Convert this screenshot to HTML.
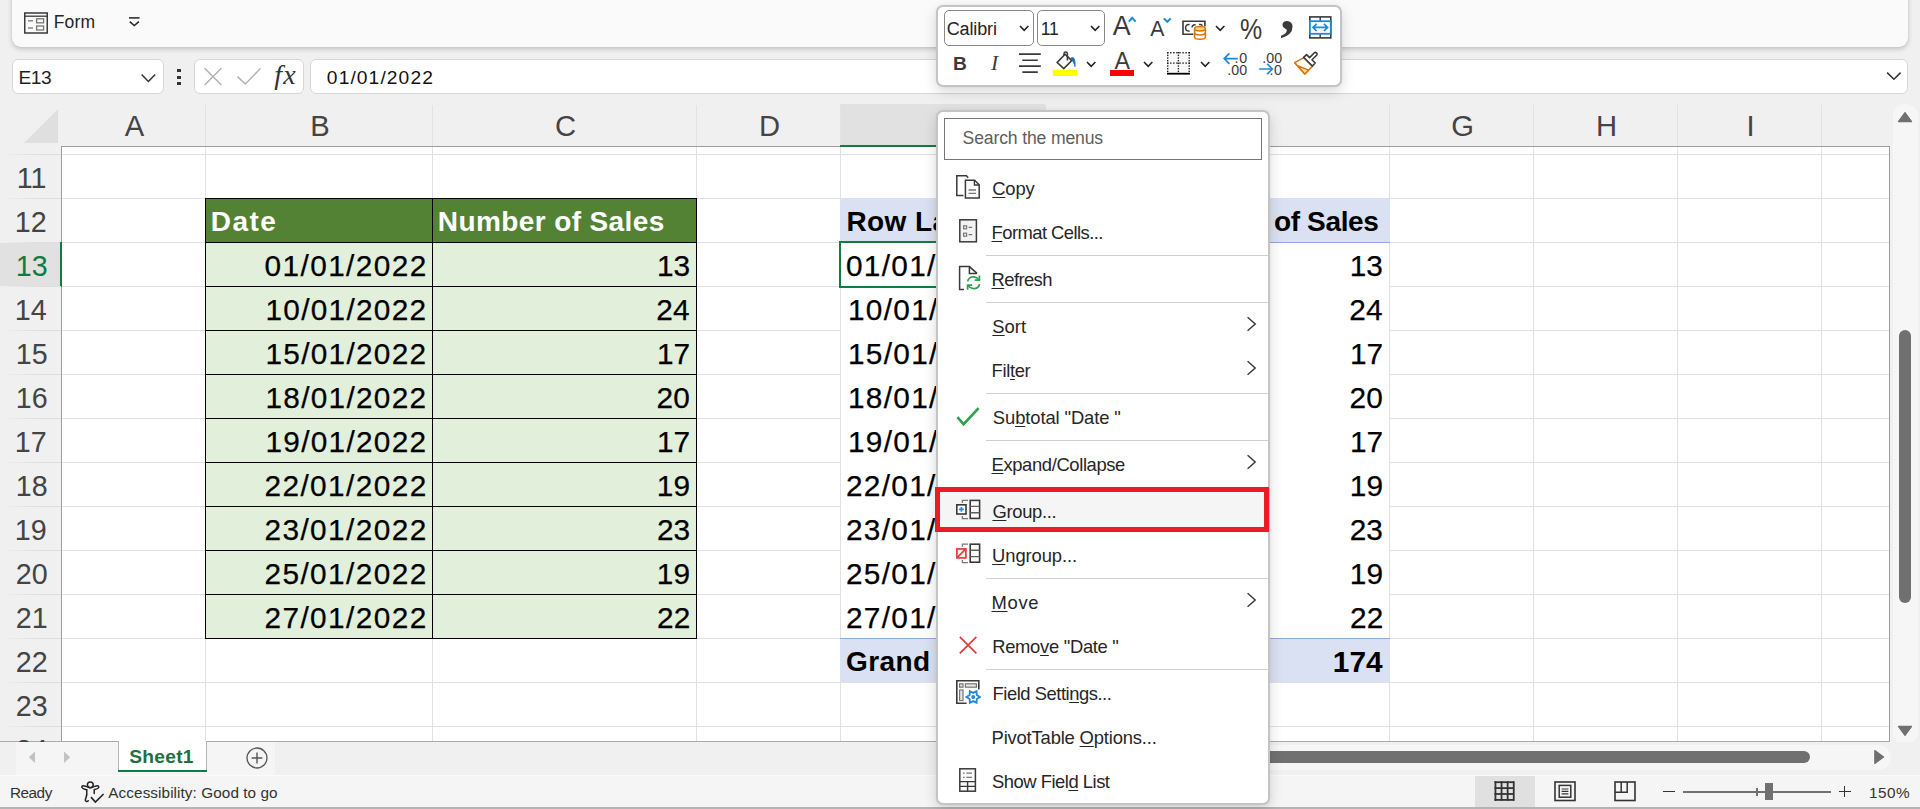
<!DOCTYPE html>
<html lang="en"><head><meta charset="utf-8"><title>Excel</title>
<style>
html,body{margin:0;padding:0}
body{width:1920px;height:809px;overflow:hidden;position:relative;background:#f0f0f0;font-family:"Liberation Sans",sans-serif}
body>div,body>svg,body>span{position:absolute;display:block}
svg{overflow:visible}
.t{white-space:pre}
u{text-decoration-thickness:1.1px;text-underline-offset:1.5px}
</style></head>
<body>
<div style="left:12px;top:-12px;width:1896px;height:59px;background:#fafafa;border-radius:9px;box-shadow:0 2px 5px rgba(0,0,0,.2),0 0 1px rgba(0,0,0,.12);"></div>
<svg style="left:23px;top:11px;" width="26" height="24" viewBox="0 0 26 24"><rect x="1.75" y="2" width="22.5" height="20" fill="none" stroke="#3b3a39" stroke-width="1.5"/>
<line x1="1.75" y1="5.2" x2="24.25" y2="5.2" stroke="#3b3a39" stroke-width="1.3"/>
<line x1="5" y1="9.8" x2="10" y2="9.8" stroke="#797775" stroke-width="1.3"/><line x1="5" y1="17" x2="10" y2="17" stroke="#797775" stroke-width="1.3"/>
<rect x="13.6" y="7.8" width="7" height="4" fill="none" stroke="#797775" stroke-width="1.3"/><rect x="13.6" y="15" width="7" height="4" fill="none" stroke="#797775" stroke-width="1.3"/></svg>
<span id="form" class="t" style="left:53.69px;top:10.74px;font-size:17.5px;line-height:23px;color:#242424;font-family:'Liberation Sans',sans-serif;letter-spacing:0.210px;">Form</span>
<svg style="left:127px;top:15px;" width="15" height="13" viewBox="0 0 15 13"><line x1="2" y1="2.9" x2="12.6" y2="2.9" stroke="#242424" stroke-width="1.5"/><polyline points="2.7,6.6 7.3,10.6 11.9,6.6" fill="none" stroke="#242424" stroke-width="1.5"/></svg>
<div style="left:12px;top:59px;width:152px;height:35px;background:#fff;border:1px solid #d6d6d6;border-radius:6px;box-sizing:border-box;"></div>
<span id="namebox" class="t" style="left:18.45px;top:65.20px;font-size:19.2px;line-height:25px;color:#1f1f1f;font-family:'Liberation Sans',sans-serif;letter-spacing:-0.394px;">E13</span>
<svg style="left:139px;top:71px;" width="20" height="14" viewBox="0 0 20 14"><polyline points="2.6,3.4 9.4,10.4 16.2,3.4" fill="none" stroke="#333" stroke-width="1.5"/></svg>
<div style="left:177px;top:69px;width:3.5px;height:3.2px;background:#333;"></div>
<div style="left:177px;top:75.5px;width:3.5px;height:3.2px;background:#333;"></div>
<div style="left:177px;top:81.5px;width:3.5px;height:3.2px;background:#333;"></div>
<div style="left:194px;top:59px;width:110px;height:35px;background:#fff;border:1px solid #d6d6d6;border-radius:6px;box-sizing:border-box;"></div>
<svg style="left:202px;top:66px;" width="22" height="22" viewBox="0 0 22 22"><path d="M2.6 2.2 L19.4 19 M19.4 2.2 L2.6 19" stroke="#b3b3b3" stroke-width="1.5" fill="none"/></svg>
<svg style="left:235px;top:65px;" width="28" height="22" viewBox="0 0 28 22"><polyline points="2.4,11.6 10.4,19 25.6,3.2" fill="none" stroke="#b3b3b3" stroke-width="1.5"/></svg>
<span id="fx" class="t" style="left:274.36px;top:56.75px;font-size:28px;line-height:36px;color:#333;font-family:'Liberation Serif',serif;font-style:italic;letter-spacing:1.213px;">fx</span>
<div style="left:310px;top:59px;width:1598px;height:35px;background:#fff;border:1px solid #d6d6d6;border-radius:6px;box-sizing:border-box;"></div>
<span id="formula" class="t" style="left:326.87px;top:65.20px;font-size:19.2px;line-height:25px;color:#111;font-family:'Liberation Sans',sans-serif;letter-spacing:1.105px;">01/01/2022</span>
<svg style="left:1885px;top:70px;" width="18" height="12" viewBox="0 0 18 12"><polyline points="2.2,2.6 8.9,9.3 15.6,2.6" fill="none" stroke="#333" stroke-width="1.5"/></svg>
<div style="left:0px;top:104px;width:1889px;height:42px;background:#f0f0f0;"></div>
<div style="left:840px;top:104px;width:205px;height:42px;background:#e1e1e1;"></div>
<span id="colA" class="t nofit" style="left:124.00px;top:107.48px;font-size:29.2px;line-height:38px;color:#444444;font-family:'Liberation Sans',sans-serif;left:62.6px;width:144px;text-align:center;">A</span>
<div style="left:205px;top:105px;width:1px;height:41px;background:#e3e3e3;"></div>
<span id="colB" class="t nofit" style="left:309.50px;top:107.48px;font-size:29.2px;line-height:38px;color:#444444;font-family:'Liberation Sans',sans-serif;left:206.6px;width:227px;text-align:center;">B</span>
<div style="left:432px;top:105px;width:1px;height:41px;background:#e3e3e3;"></div>
<span id="colC" class="t nofit" style="left:555.00px;top:107.48px;font-size:29.2px;line-height:38px;color:#444444;font-family:'Liberation Sans',sans-serif;left:433.6px;width:264px;text-align:center;">C</span>
<div style="left:696px;top:105px;width:1px;height:41px;background:#e3e3e3;"></div>
<span id="colD" class="t nofit" style="left:759.00px;top:107.48px;font-size:29.2px;line-height:38px;color:#444444;font-family:'Liberation Sans',sans-serif;left:697.6px;width:144px;text-align:center;">D</span>
<div style="left:840px;top:105px;width:1px;height:41px;background:#e3e3e3;"></div>
<span id="colE" class="t nofit" style="left:933.50px;top:107.48px;font-size:29.2px;line-height:38px;color:#444444;font-family:'Liberation Sans',sans-serif;left:853.6px;width:205px;text-align:center;">E</span>
<div style="left:1045px;top:105px;width:1px;height:41px;background:#e3e3e3;"></div>
<span id="colF" class="t nofit" style="left:1208.00px;top:107.48px;font-size:29.2px;line-height:38px;color:#444444;font-family:'Liberation Sans',sans-serif;left:1046.6px;width:344px;text-align:center;">F</span>
<div style="left:1389px;top:105px;width:1px;height:41px;background:#e3e3e3;"></div>
<span id="colG" class="t nofit" style="left:1452.00px;top:107.48px;font-size:29.2px;line-height:38px;color:#444444;font-family:'Liberation Sans',sans-serif;left:1390.6px;width:144px;text-align:center;">G</span>
<div style="left:1533px;top:105px;width:1px;height:41px;background:#e3e3e3;"></div>
<span id="colH" class="t nofit" style="left:1596.00px;top:107.48px;font-size:29.2px;line-height:38px;color:#444444;font-family:'Liberation Sans',sans-serif;left:1534.6px;width:144px;text-align:center;">H</span>
<div style="left:1677px;top:105px;width:1px;height:41px;background:#e3e3e3;"></div>
<span id="colI" class="t nofit" style="left:1740.00px;top:107.48px;font-size:29.2px;line-height:38px;color:#444444;font-family:'Liberation Sans',sans-serif;left:1678.6px;width:144px;text-align:center;">I</span>
<div style="left:1821px;top:105px;width:1px;height:41px;background:#e3e3e3;"></div>
<svg style="left:20px;top:106px;" width="42" height="40" viewBox="0 0 42 40"><polygon points="38,3 38,37 4,37" fill="#dfdfdf"/></svg>
<div style="left:61px;top:146px;width:1829px;height:596px;background:#fff;"></div>
<div style="left:62px;top:154px;width:1827px;height:1px;background:#e1e1e1;"></div>
<div style="left:62px;top:198px;width:1827px;height:1px;background:#e1e1e1;"></div>
<div style="left:62px;top:242px;width:1827px;height:1px;background:#e1e1e1;"></div>
<div style="left:62px;top:286px;width:1827px;height:1px;background:#e1e1e1;"></div>
<div style="left:62px;top:330px;width:1827px;height:1px;background:#e1e1e1;"></div>
<div style="left:62px;top:374px;width:1827px;height:1px;background:#e1e1e1;"></div>
<div style="left:62px;top:418px;width:1827px;height:1px;background:#e1e1e1;"></div>
<div style="left:62px;top:462px;width:1827px;height:1px;background:#e1e1e1;"></div>
<div style="left:62px;top:506px;width:1827px;height:1px;background:#e1e1e1;"></div>
<div style="left:62px;top:550px;width:1827px;height:1px;background:#e1e1e1;"></div>
<div style="left:62px;top:594px;width:1827px;height:1px;background:#e1e1e1;"></div>
<div style="left:62px;top:638px;width:1827px;height:1px;background:#e1e1e1;"></div>
<div style="left:62px;top:682px;width:1827px;height:1px;background:#e1e1e1;"></div>
<div style="left:62px;top:726px;width:1827px;height:1px;background:#e1e1e1;"></div>
<div style="left:205px;top:147px;width:1px;height:594px;background:#e1e1e1;"></div>
<div style="left:432px;top:147px;width:1px;height:594px;background:#e1e1e1;"></div>
<div style="left:696px;top:147px;width:1px;height:594px;background:#e1e1e1;"></div>
<div style="left:840px;top:147px;width:1px;height:594px;background:#e1e1e1;"></div>
<div style="left:1045px;top:147px;width:1px;height:594px;background:#e1e1e1;"></div>
<div style="left:1389px;top:147px;width:1px;height:594px;background:#e1e1e1;"></div>
<div style="left:1533px;top:147px;width:1px;height:594px;background:#e1e1e1;"></div>
<div style="left:1677px;top:147px;width:1px;height:594px;background:#e1e1e1;"></div>
<div style="left:1821px;top:147px;width:1px;height:594px;background:#e1e1e1;"></div>
<div style="left:841px;top:243px;width:548px;height:395px;background:#fff;"></div>
<div style="left:61px;top:146px;width:1829px;height:1px;background:#9e9e9e;"></div>
<div style="left:840px;top:145px;width:205px;height:2px;background:#107c41;"></div>
<div style="left:61px;top:146px;width:1px;height:595px;background:#9e9e9e;"></div>
<div style="left:1889px;top:146px;width:1px;height:596px;background:#9e9e9e;"></div>
<div style="left:0px;top:741px;width:1890px;height:1px;background:#ababab;"></div>
<div style="left:0px;top:198px;width:61px;height:1px;background:linear-gradient(90deg,rgba(224,224,224,0),#dedede 60%);"></div>
<span id="row11" class="t" style="left:15.61px;top:157.94px;font-size:30.2px;line-height:39px;color:#444444;font-family:'Liberation Sans',sans-serif;transform:scaleX(.95);transform-origin:50% 50%;">11</span>
<div style="left:0px;top:242px;width:61px;height:1px;background:linear-gradient(90deg,rgba(224,224,224,0),#dedede 60%);"></div>
<span id="row12" class="t" style="left:14.26px;top:201.94px;font-size:30.2px;line-height:39px;color:#444444;font-family:'Liberation Sans',sans-serif;transform:scaleX(.95);transform-origin:50% 50%;">12</span>
<div style="left:0px;top:243px;width:60px;height:43px;background:#e1e1e1;"></div>
<div style="left:60px;top:242px;width:2px;height:45px;background:#107c41;"></div>
<div style="left:0px;top:286px;width:61px;height:1px;background:linear-gradient(90deg,rgba(224,224,224,0),#dedede 60%);"></div>
<span id="row13" class="t" style="left:14.96px;top:245.94px;font-size:30.2px;line-height:39px;color:#107c41;font-family:'Liberation Sans',sans-serif;transform:scaleX(.95);transform-origin:50% 50%;">13</span>
<div style="left:0px;top:330px;width:61px;height:1px;background:linear-gradient(90deg,rgba(224,224,224,0),#dedede 60%);"></div>
<span id="row14" class="t" style="left:14.08px;top:289.94px;font-size:30.2px;line-height:39px;color:#444444;font-family:'Liberation Sans',sans-serif;transform:scaleX(.95);transform-origin:50% 50%;">14</span>
<div style="left:0px;top:374px;width:61px;height:1px;background:linear-gradient(90deg,rgba(224,224,224,0),#dedede 60%);"></div>
<span id="row15" class="t" style="left:14.85px;top:333.94px;font-size:30.2px;line-height:39px;color:#444444;font-family:'Liberation Sans',sans-serif;transform:scaleX(.95);transform-origin:50% 50%;">15</span>
<div style="left:0px;top:418px;width:61px;height:1px;background:linear-gradient(90deg,rgba(224,224,224,0),#dedede 60%);"></div>
<span id="row16" class="t" style="left:14.89px;top:377.94px;font-size:30.2px;line-height:39px;color:#444444;font-family:'Liberation Sans',sans-serif;transform:scaleX(.95);transform-origin:50% 50%;">16</span>
<div style="left:0px;top:462px;width:61px;height:1px;background:linear-gradient(90deg,rgba(224,224,224,0),#dedede 60%);"></div>
<span id="row17" class="t" style="left:14.26px;top:421.94px;font-size:30.2px;line-height:39px;color:#444444;font-family:'Liberation Sans',sans-serif;transform:scaleX(.95);transform-origin:50% 50%;">17</span>
<div style="left:0px;top:506px;width:61px;height:1px;background:linear-gradient(90deg,rgba(224,224,224,0),#dedede 60%);"></div>
<span id="row18" class="t" style="left:14.95px;top:465.94px;font-size:30.2px;line-height:39px;color:#444444;font-family:'Liberation Sans',sans-serif;transform:scaleX(.95);transform-origin:50% 50%;">18</span>
<div style="left:0px;top:550px;width:61px;height:1px;background:linear-gradient(90deg,rgba(224,224,224,0),#dedede 60%);"></div>
<span id="row19" class="t" style="left:14.08px;top:509.94px;font-size:30.2px;line-height:39px;color:#444444;font-family:'Liberation Sans',sans-serif;transform:scaleX(.95);transform-origin:50% 50%;">19</span>
<div style="left:0px;top:594px;width:61px;height:1px;background:linear-gradient(90deg,rgba(224,224,224,0),#dedede 60%);"></div>
<span id="row20" class="t" style="left:14.50px;top:553.94px;font-size:30.2px;line-height:39px;color:#444444;font-family:'Liberation Sans',sans-serif;transform:scaleX(.95);transform-origin:50% 50%;">20</span>
<div style="left:0px;top:638px;width:61px;height:1px;background:linear-gradient(90deg,rgba(224,224,224,0),#dedede 60%);"></div>
<span id="row21" class="t" style="left:15.23px;top:597.94px;font-size:30.2px;line-height:39px;color:#444444;font-family:'Liberation Sans',sans-serif;transform:scaleX(.95);transform-origin:50% 50%;">21</span>
<div style="left:0px;top:682px;width:61px;height:1px;background:linear-gradient(90deg,rgba(224,224,224,0),#dedede 60%);"></div>
<span id="row22" class="t" style="left:15.29px;top:641.94px;font-size:30.2px;line-height:39px;color:#444444;font-family:'Liberation Sans',sans-serif;transform:scaleX(.95);transform-origin:50% 50%;">22</span>
<div style="left:0px;top:726px;width:61px;height:1px;background:linear-gradient(90deg,rgba(224,224,224,0),#dedede 60%);"></div>
<span id="row23" class="t" style="left:14.95px;top:685.94px;font-size:30.2px;line-height:39px;color:#444444;font-family:'Liberation Sans',sans-serif;transform:scaleX(.95);transform-origin:50% 50%;">23</span>
<span id="row24" class="t" style="left:15.00px;top:729.94px;font-size:30.2px;line-height:39px;color:#444444;font-family:'Liberation Sans',sans-serif;transform:scaleX(.95);transform-origin:50% 50%;">24</span>
<div style="left:0px;top:154px;width:61px;height:1px;background:linear-gradient(90deg,rgba(224,224,224,0),#dedede 60%);"></div>
<div style="left:205px;top:198px;width:492px;height:45px;background:#548235;"></div>
<div style="left:205px;top:243px;width:492px;height:396px;background:#e2efda;"></div>
<div style="left:205px;top:198px;width:492px;height:1px;background:#000;"></div>
<div style="left:205px;top:242px;width:492px;height:1px;background:#000;"></div>
<div style="left:205px;top:286px;width:492px;height:1px;background:#000;"></div>
<div style="left:205px;top:330px;width:492px;height:1px;background:#000;"></div>
<div style="left:205px;top:374px;width:492px;height:1px;background:#000;"></div>
<div style="left:205px;top:418px;width:492px;height:1px;background:#000;"></div>
<div style="left:205px;top:462px;width:492px;height:1px;background:#000;"></div>
<div style="left:205px;top:506px;width:492px;height:1px;background:#000;"></div>
<div style="left:205px;top:550px;width:492px;height:1px;background:#000;"></div>
<div style="left:205px;top:594px;width:492px;height:1px;background:#000;"></div>
<div style="left:205px;top:638px;width:492px;height:1px;background:#000;"></div>
<div style="left:205px;top:198px;width:1px;height:441px;background:#000;"></div>
<div style="left:432px;top:198px;width:1px;height:441px;background:#000;"></div>
<div style="left:696px;top:198px;width:1px;height:441px;background:#000;"></div>
<span id="hdate" class="t" style="left:210.86px;top:204.40px;font-size:28px;line-height:36px;color:#fff;font-family:'Liberation Sans',sans-serif;font-weight:bold;letter-spacing:1.460px;">Date</span>
<span id="hnum" class="t" style="left:437.86px;top:204.40px;font-size:28px;line-height:36px;color:#fff;font-family:'Liberation Sans',sans-serif;font-weight:bold;letter-spacing:0.388px;">Number of Sales</span>
<span id="d13" class="t" style="left:264.61px;top:246.27px;font-size:29.8px;line-height:39px;color:#000;font-family:'Liberation Sans',sans-serif;letter-spacing:1.389px;-webkit-text-stroke:0.25px #000;">01/01/2022</span>
<span id="n13" class="t" style="left:656.92px;top:246.27px;font-size:29.8px;line-height:39px;color:#000;font-family:'Liberation Sans',sans-serif;-webkit-text-stroke:0.25px #000;">13</span>
<span id="d14" class="t" style="left:265.43px;top:290.27px;font-size:29.8px;line-height:39px;color:#000;font-family:'Liberation Sans',sans-serif;letter-spacing:1.283px;-webkit-text-stroke:0.25px #000;">10/01/2022</span>
<span id="n14" class="t" style="left:656.35px;top:290.27px;font-size:29.8px;line-height:39px;color:#000;font-family:'Liberation Sans',sans-serif;-webkit-text-stroke:0.25px #000;">24</span>
<span id="d15" class="t" style="left:265.43px;top:334.27px;font-size:29.8px;line-height:39px;color:#000;font-family:'Liberation Sans',sans-serif;letter-spacing:1.283px;-webkit-text-stroke:0.25px #000;">15/01/2022</span>
<span id="n15" class="t" style="left:656.90px;top:334.27px;font-size:29.8px;line-height:39px;color:#000;font-family:'Liberation Sans',sans-serif;-webkit-text-stroke:0.25px #000;">17</span>
<span id="d16" class="t" style="left:265.43px;top:378.27px;font-size:29.8px;line-height:39px;color:#000;font-family:'Liberation Sans',sans-serif;letter-spacing:1.283px;-webkit-text-stroke:0.25px #000;">18/01/2022</span>
<span id="n16" class="t" style="left:656.57px;top:378.27px;font-size:29.8px;line-height:39px;color:#000;font-family:'Liberation Sans',sans-serif;-webkit-text-stroke:0.25px #000;">20</span>
<span id="d17" class="t" style="left:265.43px;top:422.27px;font-size:29.8px;line-height:39px;color:#000;font-family:'Liberation Sans',sans-serif;letter-spacing:1.283px;-webkit-text-stroke:0.25px #000;">19/01/2022</span>
<span id="n17" class="t" style="left:656.90px;top:422.27px;font-size:29.8px;line-height:39px;color:#000;font-family:'Liberation Sans',sans-serif;-webkit-text-stroke:0.25px #000;">17</span>
<span id="d18" class="t" style="left:264.38px;top:466.27px;font-size:29.8px;line-height:39px;color:#000;font-family:'Liberation Sans',sans-serif;letter-spacing:1.433px;-webkit-text-stroke:0.25px #000;">22/01/2022</span>
<span id="n18" class="t" style="left:656.82px;top:466.27px;font-size:29.8px;line-height:39px;color:#000;font-family:'Liberation Sans',sans-serif;-webkit-text-stroke:0.25px #000;">19</span>
<span id="d19" class="t" style="left:264.38px;top:510.27px;font-size:29.8px;line-height:39px;color:#000;font-family:'Liberation Sans',sans-serif;letter-spacing:1.433px;-webkit-text-stroke:0.25px #000;">23/01/2022</span>
<span id="n19" class="t" style="left:656.92px;top:510.27px;font-size:29.8px;line-height:39px;color:#000;font-family:'Liberation Sans',sans-serif;-webkit-text-stroke:0.25px #000;">23</span>
<span id="d20" class="t" style="left:264.38px;top:554.27px;font-size:29.8px;line-height:39px;color:#000;font-family:'Liberation Sans',sans-serif;letter-spacing:1.433px;-webkit-text-stroke:0.25px #000;">25/01/2022</span>
<span id="n20" class="t" style="left:656.82px;top:554.27px;font-size:29.8px;line-height:39px;color:#000;font-family:'Liberation Sans',sans-serif;-webkit-text-stroke:0.25px #000;">19</span>
<span id="d21" class="t" style="left:264.38px;top:598.27px;font-size:29.8px;line-height:39px;color:#000;font-family:'Liberation Sans',sans-serif;letter-spacing:1.433px;-webkit-text-stroke:0.25px #000;">27/01/2022</span>
<span id="n21" class="t" style="left:657.11px;top:598.27px;font-size:29.8px;line-height:39px;color:#000;font-family:'Liberation Sans',sans-serif;-webkit-text-stroke:0.25px #000;">22</span>
<div style="left:840px;top:198px;width:550px;height:44px;background:#d9e1f2;"></div>
<div style="left:840px;top:242px;width:550px;height:1px;background:#8ea9db;"></div>
<div style="left:840px;top:638px;width:550px;height:1px;background:#8ea9db;"></div>
<div style="left:840px;top:639px;width:550px;height:43px;background:#d9e1f2;"></div>
<span id="prl" class="t nofit" style="left:846.50px;top:204.40px;font-size:28px;line-height:36px;color:#000;font-family:'Liberation Sans',sans-serif;font-weight:bold;letter-spacing:0.388px;">Row Labels</span>
<span id="psum1" class="t nofit" style="left:1045.00px;top:204.40px;font-size:28px;line-height:36px;color:#000;font-family:'Liberation Sans',sans-serif;font-weight:bold;left:900px;width:373px;text-align:right;letter-spacing:0.388px;">Sum of Number </span>
<span id="psum2" class="t" style="left:1274.02px;top:204.40px;font-size:28px;line-height:36px;color:#000;font-family:'Liberation Sans',sans-serif;font-weight:bold;letter-spacing:-0.366px;">of Sales</span>
<span id="pd13" class="t nofit" style="left:846.00px;top:246.27px;font-size:29.8px;line-height:39px;color:#000;font-family:'Liberation Sans',sans-serif;letter-spacing:1.283px;-webkit-text-stroke:0.25px #000;">01/01/2022</span>
<span id="pn13" class="t" style="left:1349.76px;top:246.27px;font-size:29.8px;line-height:39px;color:#000;font-family:'Liberation Sans',sans-serif;-webkit-text-stroke:0.25px #000;">13</span>
<span id="pd14" class="t nofit" style="left:848.00px;top:290.27px;font-size:29.8px;line-height:39px;color:#000;font-family:'Liberation Sans',sans-serif;letter-spacing:1.283px;-webkit-text-stroke:0.25px #000;">10/01/2022</span>
<span id="pn14" class="t" style="left:1349.34px;top:290.27px;font-size:29.8px;line-height:39px;color:#000;font-family:'Liberation Sans',sans-serif;-webkit-text-stroke:0.25px #000;">24</span>
<span id="pd15" class="t nofit" style="left:848.00px;top:334.27px;font-size:29.8px;line-height:39px;color:#000;font-family:'Liberation Sans',sans-serif;letter-spacing:1.283px;-webkit-text-stroke:0.25px #000;">15/01/2022</span>
<span id="pn15" class="t" style="left:1349.90px;top:334.27px;font-size:29.8px;line-height:39px;color:#000;font-family:'Liberation Sans',sans-serif;-webkit-text-stroke:0.25px #000;">17</span>
<span id="pd16" class="t nofit" style="left:848.00px;top:378.27px;font-size:29.8px;line-height:39px;color:#000;font-family:'Liberation Sans',sans-serif;letter-spacing:1.283px;-webkit-text-stroke:0.25px #000;">18/01/2022</span>
<span id="pn16" class="t" style="left:1349.57px;top:378.27px;font-size:29.8px;line-height:39px;color:#000;font-family:'Liberation Sans',sans-serif;-webkit-text-stroke:0.25px #000;">20</span>
<span id="pd17" class="t nofit" style="left:848.00px;top:422.27px;font-size:29.8px;line-height:39px;color:#000;font-family:'Liberation Sans',sans-serif;letter-spacing:1.283px;-webkit-text-stroke:0.25px #000;">19/01/2022</span>
<span id="pn17" class="t" style="left:1349.90px;top:422.27px;font-size:29.8px;line-height:39px;color:#000;font-family:'Liberation Sans',sans-serif;-webkit-text-stroke:0.25px #000;">17</span>
<span id="pd18" class="t nofit" style="left:846.00px;top:466.27px;font-size:29.8px;line-height:39px;color:#000;font-family:'Liberation Sans',sans-serif;letter-spacing:1.283px;-webkit-text-stroke:0.25px #000;">22/01/2022</span>
<span id="pn18" class="t" style="left:1349.83px;top:466.27px;font-size:29.8px;line-height:39px;color:#000;font-family:'Liberation Sans',sans-serif;-webkit-text-stroke:0.25px #000;">19</span>
<span id="pd19" class="t nofit" style="left:846.00px;top:510.27px;font-size:29.8px;line-height:39px;color:#000;font-family:'Liberation Sans',sans-serif;letter-spacing:1.283px;-webkit-text-stroke:0.25px #000;">23/01/2022</span>
<span id="pn19" class="t" style="left:1349.76px;top:510.27px;font-size:29.8px;line-height:39px;color:#000;font-family:'Liberation Sans',sans-serif;-webkit-text-stroke:0.25px #000;">23</span>
<span id="pd20" class="t nofit" style="left:846.00px;top:554.27px;font-size:29.8px;line-height:39px;color:#000;font-family:'Liberation Sans',sans-serif;letter-spacing:1.283px;-webkit-text-stroke:0.25px #000;">25/01/2022</span>
<span id="pn20" class="t" style="left:1349.83px;top:554.27px;font-size:29.8px;line-height:39px;color:#000;font-family:'Liberation Sans',sans-serif;-webkit-text-stroke:0.25px #000;">19</span>
<span id="pd21" class="t nofit" style="left:846.00px;top:598.27px;font-size:29.8px;line-height:39px;color:#000;font-family:'Liberation Sans',sans-serif;letter-spacing:1.283px;-webkit-text-stroke:0.25px #000;">27/01/2022</span>
<span id="pn21" class="t" style="left:1350.11px;top:598.27px;font-size:29.8px;line-height:39px;color:#000;font-family:'Liberation Sans',sans-serif;-webkit-text-stroke:0.25px #000;">22</span>
<span id="pgt" class="t nofit" style="left:846.00px;top:644.40px;font-size:28px;line-height:36px;color:#000;font-family:'Liberation Sans',sans-serif;font-weight:bold;letter-spacing:0.388px;">Grand Total</span>
<span id="p174" class="t" style="left:1332.83px;top:642.27px;font-size:29.8px;line-height:39px;color:#000;font-family:'Liberation Sans',sans-serif;font-weight:bold;">174</span>
<div style="left:839px;top:241px;width:208px;height:47px;border:2px solid #107c41;box-sizing:border-box;"></div>
<div style="left:1893px;top:104px;width:25px;height:640px;background:#f6f6f6;border-radius:12px;"></div>
<svg style="left:1896px;top:110px;" width="18" height="14" viewBox="0 0 18 14"><path d="M9 2.6 L15.6 11.6 L2.4 11.6 Z" fill="#707070" stroke="#707070" stroke-width="1.2" stroke-linejoin="round"/></svg>
<svg style="left:1896px;top:724px;" width="18" height="14" viewBox="0 0 18 14"><path d="M9 11.4 L15.6 2.4 L2.4 2.4 Z" fill="#707070" stroke="#707070" stroke-width="1.2" stroke-linejoin="round"/></svg>
<div style="left:1899px;top:330px;width:12px;height:273px;background:#707070;border-radius:6px;"></div>
<div style="left:0px;top:742px;width:1920px;height:33px;background:#f0f0f0;"></div>
<div style="left:16px;top:742px;width:259px;height:33px;background:#f5f5f5;"></div>
<svg style="left:27px;top:750px;" width="10" height="15" viewBox="0 0 10 15"><polygon points="8,1.6 8,13 1.8,7.3" fill="#c2c2c2"/></svg>
<svg style="left:62px;top:750px;" width="10" height="15" viewBox="0 0 10 15"><polygon points="2,1.6 2,13 8.2,7.3" fill="#c2c2c2"/></svg>
<div style="left:118px;top:741px;width:89px;height:31px;background:#fff;border-left:1px solid #b5b5b5;border-right:1px solid #b5b5b5;box-sizing:border-box;"></div>
<div style="left:118px;top:769.5px;width:89px;height:2.5px;background:#107c41;"></div>
<span id="sheet1" class="t" style="left:129.31px;top:744.20px;font-size:19.2px;line-height:25px;color:#1e6f42;font-family:'Liberation Sans',sans-serif;font-weight:bold;letter-spacing:0.249px;">Sheet1</span>
<svg style="left:245px;top:746px;" width="24" height="24" viewBox="0 0 24 24"><circle cx="12" cy="12" r="10" fill="none" stroke="#555" stroke-width="1.3"/><path d="M12 6.6V17.4M6.6 12H17.4" stroke="#555" stroke-width="1.4"/></svg>
<div style="left:1240px;top:745px;width:651px;height:25px;background:#f6f6f6;border-radius:0 12.5px 12.5px 0;"></div>
<div style="left:1240px;top:751px;width:570px;height:12px;background:#707070;border-radius:6px;"></div>
<svg style="left:1872px;top:748px;" width="14" height="18" viewBox="0 0 14 18"><path d="M2.8 2.6 L11.6 9 L2.8 15.4 Z" fill="#707070" stroke="#707070" stroke-width="1.2" stroke-linejoin="round"/></svg>
<div style="left:0px;top:775px;width:1920px;height:32px;background:#f5f5f5;"></div>
<div style="left:0px;top:774.6px;width:1920px;height:1.4px;background:#fbfbfb;"></div>
<div style="left:0px;top:807px;width:1920px;height:2px;background:#b4b4b4;"></div>
<span id="ready" class="t" style="left:9.96px;top:782.80px;font-size:15.3px;line-height:20px;color:#333;font-family:'Liberation Sans',sans-serif;letter-spacing:-0.468px;">Ready</span>
<span id="acc" class="t" style="left:108.34px;top:782.80px;font-size:15.3px;line-height:20px;color:#333;font-family:'Liberation Sans',sans-serif;letter-spacing:0.074px;">Accessibility: Good to go</span>
<svg style="left:80px;top:779px;" width="26" height="26" viewBox="0 0 26 26"><circle cx="10.3" cy="5.8" r="2.9" fill="none" stroke="#242424" stroke-width="1.5"/>
<path d="M6.7 10.7 C4 10 1.6 9.4 1.8 7.8 C2 6.4 4 6.6 6 7.4 C8 8.3 9 8.7 10.3 8.7 C11.6 8.7 12.6 8.3 14.6 7.4 C16.6 6.6 18.6 6.4 18.8 7.8 C19 9.4 16.6 10 14.2 10.7 L14.2 14.6" fill="none" stroke="#242424" stroke-width="1.5" stroke-linecap="round" stroke-linejoin="round"/>
<path d="M6.7 10.7 C7.1 14 7 17 5.8 19.4 C5 21 5.2 22.3 6.4 22.5 C7.2 22.6 7.8 22.3 8.3 21.8" fill="none" stroke="#242424" stroke-width="1.5" stroke-linecap="round"/>
<polyline points="11,18.1 15.4,23 23.6,15" fill="none" stroke="#242424" stroke-width="1.6"/></svg>
<div style="left:1475px;top:776px;width:60px;height:31px;background:#e0e0e0;"></div>
<svg style="left:1494px;top:781.3px;" width="20.5" height="20" viewBox="0 0 20 20"><line x1="1.2" y1="0.2" x2="1.2" y2="19.8" stroke="#333" stroke-width="1.8"/><line x1="0.2" y1="1.2" x2="19.8" y2="1.2" stroke="#333" stroke-width="1.8"/><line x1="7.3" y1="0.2" x2="7.3" y2="19.8" stroke="#333" stroke-width="1.8"/><line x1="0.2" y1="7.1000000000000005" x2="19.8" y2="7.1000000000000005" stroke="#333" stroke-width="1.8"/><line x1="13.399999999999999" y1="0.2" x2="13.399999999999999" y2="19.8" stroke="#333" stroke-width="1.8"/><line x1="0.2" y1="13.0" x2="19.8" y2="13.0" stroke="#333" stroke-width="1.8"/><line x1="19.499999999999996" y1="0.2" x2="19.499999999999996" y2="19.8" stroke="#333" stroke-width="1.8"/><line x1="0.2" y1="18.900000000000002" x2="19.8" y2="18.900000000000002" stroke="#333" stroke-width="1.8"/></svg>
<svg style="left:1554px;top:781px;" width="22" height="20.5" viewBox="0 0 22 20.5"><rect x="1" y="1" width="20" height="18.5" fill="none" stroke="#333" stroke-width="1.6"/><rect x="5.2" y="4.4" width="11.6" height="11.8" fill="none" stroke="#333" stroke-width="1.5"/><path d="M7.6 8H14.4M7.6 10.4H14.4M7.6 12.8H14.4" stroke="#333" stroke-width="1.2"/></svg>
<svg style="left:1614px;top:781px;" width="22" height="20.5" viewBox="0 0 22 20.5"><rect x="1" y="1" width="20" height="18.5" fill="none" stroke="#333" stroke-width="1.6"/><path d="M1 11.2H13.2V1M7.2 1V11.2" fill="none" stroke="#333" stroke-width="1.5"/></svg>
<div style="left:1663px;top:790.8px;width:11.5px;height:1.3px;background:#333;"></div>
<div style="left:1683px;top:790.5px;width:148px;height:2px;background:#707070;"></div>
<div style="left:1756.2px;top:787.5px;width:1.8px;height:8.5px;background:#707070;"></div>
<div style="left:1765px;top:783px;width:8px;height:17px;background:#707070;"></div>
<div style="left:1839px;top:790.8px;width:11.5px;height:1.3px;background:#333;"></div>
<div style="left:1844.1px;top:785.7px;width:1.3px;height:11.5px;background:#333;"></div>
<span id="zoom" class="t" style="left:1869.00px;top:783.05px;font-size:15.3px;line-height:20px;color:#333;font-family:'Liberation Sans',sans-serif;letter-spacing:0.490px;">150%</span>
<div style="left:936px;top:5px;width:405.5px;height:82px;background:#fff;border:2px solid #c6c4c2;border-radius:7px;box-sizing:border-box;box-shadow:0 5px 14px rgba(0,0,0,.15),0 0 3px rgba(0,0,0,.05);"></div>
<div style="left:944px;top:10px;width:90px;height:36px;border:1px solid #8a8886;border-radius:5px;box-sizing:border-box;background:#fff;"></div>
<span id="calibri" class="t" style="left:946.73px;top:17.61px;font-size:18px;line-height:23px;color:#242424;font-family:'Liberation Sans',sans-serif;letter-spacing:-0.139px;">Calibri</span>
<svg style="left:1018.3px;top:23.6px;" width="12.4" height="8.4" viewBox="0 0 12.4 8.4"><polyline points="2,2 6.2,6.4 10.4,2" fill="none" stroke="#242424" stroke-width="1.6"/></svg>
<div style="left:1037px;top:10px;width:67.5px;height:36px;border:1px solid #8a8886;border-radius:5px;box-sizing:border-box;background:#fff;"></div>
<span id="sz11" class="t" style="left:1040.67px;top:17.79px;font-size:17.5px;line-height:23px;color:#242424;font-family:'Liberation Sans',sans-serif;">11</span>
<svg style="left:1089.3px;top:23.6px;" width="12.4" height="8.4" viewBox="0 0 12.4 8.4"><polyline points="2,2 6.2,6.4 10.4,2" fill="none" stroke="#242424" stroke-width="1.6"/></svg>
<span id="growA" class="t" style="left:1112.73px;top:9.21px;font-size:26.8px;line-height:35px;color:#3b3a39;font-family:'Liberation Sans',sans-serif;">A</span>
<svg style="left:1126px;top:14px;" width="12" height="10" viewBox="0 0 12 10"><polyline points="2.9,7.6 6.2,3.8 9.6,7.6" fill="none" stroke="#1e8ad6" stroke-width="2"/></svg>
<span id="shrinkA" class="t" style="left:1150.35px;top:14.65px;font-size:21.2px;line-height:28px;color:#3b3a39;font-family:'Liberation Sans',sans-serif;">A</span>
<svg style="left:1161px;top:15px;" width="12" height="10" viewBox="0 0 12 10"><polyline points="2.8,3.4 6.3,6.8 9.8,3.4" fill="none" stroke="#1e8ad6" stroke-width="2"/></svg>
<svg style="left:1180px;top:18px;" width="28" height="24" viewBox="0 0 28 24"><path d="M24.9 8.4 V3.3 H3 V16.3 H13.4" fill="none" stroke="#3b3a39" stroke-width="1.6"/>
<path d="M9.6 6.6 C6.4 6.2 5.6 8.2 5.6 9.8 C5.6 11.6 6.4 13.4 9.6 13" fill="none" stroke="#3b3a39" stroke-width="1.5"/>
<path d="M15.6 7 C13.4 6.4 12.2 7.6 12 9.4" fill="none" stroke="#3b3a39" stroke-width="1.5"/>
<path d="M19 6.6 C21 6.2 22 6.8 22.4 7.8" fill="none" stroke="#3b3a39" stroke-width="1.5"/>
<path d="M14.6 10.8 V19 C14.6 22 25.4 22 25.4 19 V10.8" fill="#fff" stroke="#d9730d" stroke-width="1.5"/>
<ellipse cx="20" cy="10.8" rx="5.4" ry="2.2" fill="#fbd38a" stroke="#d9730d" stroke-width="1.5"/>
<path d="M14.6 14.8 C14.6 17.6 25.4 17.6 25.4 14.8" fill="none" stroke="#d9730d" stroke-width="1.5"/></svg>
<svg style="left:1214px;top:24.3px;" width="12.4" height="8.4" viewBox="0 0 12.4 8.4"><polyline points="2,2 6.2,6.4 10.4,2" fill="none" stroke="#242424" stroke-width="1.6"/></svg>
<span id="pct" class="t" style="left:1239.79px;top:9.75px;font-size:29px;line-height:38px;color:#3b3a39;font-family:'Liberation Sans',sans-serif;transform:scaleX(.86);transform-origin:0 0;">%</span>
<span id="comma" class="t" style="left:1280.16px;top:-28.17px;font-size:58px;line-height:75px;color:#3b3a39;font-family:'Liberation Serif',serif;font-weight:bold;">,</span>
<svg style="left:1307px;top:14px;" width="27" height="27" viewBox="0 0 27 27"><rect x="2.8" y="2.9" width="21" height="21" fill="none" stroke="#3b3a39" stroke-width="1.6"/>
<line x1="13.2" y1="2.9" x2="13.2" y2="23.9" stroke="#3b3a39" stroke-width="1.4"/>
<rect x="2.9" y="7.2" width="20.9" height="12.6" fill="#fafafa" stroke="#1e8ad6" stroke-width="1.8"/>
<path d="M6.2 13.4 H20.4 M9.6 9.8 L6 13.4 L9.6 17 M17 9.8 L20.6 13.4 L17 17" fill="none" stroke="#1e8ad6" stroke-width="1.7"/></svg>
<span id="bold" class="t" style="left:952.99px;top:50.85px;font-size:19.2px;line-height:25px;color:#3b3a39;font-family:'Liberation Sans',sans-serif;font-weight:bold;">B</span>
<span id="ital" class="t" style="left:990.88px;top:48.74px;font-size:21.5px;line-height:28px;color:#3b3a39;font-family:'Liberation Serif',serif;font-style:italic;">I</span>
<svg style="left:1017px;top:50px;" width="26" height="26" viewBox="0 0 26 26"><path d="M2 4.1H23.8M5.3 10.25H20.8M2 16.1H23.8M5.3 22.2H20.8" stroke="#3b3a39" stroke-width="1.7" fill="none"/></svg>
<svg style="left:1052px;top:48px;" width="28" height="30" viewBox="0 0 28 30"><path d="M13 6.2 L5.2 14.5 L11.8 20.6 L19.8 12.6 Z" fill="#f8f8f8" stroke="#3b3a39" stroke-width="1.6" stroke-linejoin="miter"/>
<path d="M12 7.4 V5.6 C12 3.4 15.4 3.4 15.4 5.6 V12.6" fill="none" stroke="#3b3a39" stroke-width="1.5"/>
<path d="M19.4 9.6 C21.8 8.6 23.6 11 23 18.6 C22 15.6 21.2 13 19.4 11.6 Z" fill="#1a6dc2" stroke="#1a6dc2" stroke-width=".8"/>
<rect x="0.8" y="22" width="24.2" height="6" fill="#ffff00"/></svg>
<svg style="left:1085px;top:60.2px;" width="12.4" height="8.4" viewBox="0 0 12.4 8.4"><polyline points="2,2 6.2,6.4 10.4,2" fill="none" stroke="#242424" stroke-width="1.6"/></svg>
<span id="fcA" class="t" style="left:1114.47px;top:46.16px;font-size:23.2px;line-height:30px;color:#3b3a39;font-family:'Liberation Sans',sans-serif;">A</span>
<div style="left:1110px;top:70px;width:24px;height:6px;background:#ff0000;"></div>
<svg style="left:1141.9px;top:60.2px;" width="12.4" height="8.4" viewBox="0 0 12.4 8.4"><polyline points="2,2 6.2,6.4 10.4,2" fill="none" stroke="#242424" stroke-width="1.6"/></svg>
<svg style="left:1166px;top:51px;" width="25" height="25" viewBox="0 0 25 25"><rect x="1.5" y="1.5" width="22" height="19" fill="#f8f8f8"/><g fill="#222"><rect x="1.00" y="1" width="1.4" height="1.4"/><rect x="1" y="1.00" width="1.4" height="1.4"/><rect x="22.5" y="1.00" width="1.4" height="1.4"/><rect x="1.00" y="11.4" width="1.4" height="1.4"/><rect x="11.7" y="1.00" width="1.4" height="1.4"/><rect x="4.07" y="1" width="1.4" height="1.4"/><rect x="1" y="3.67" width="1.4" height="1.4"/><rect x="22.5" y="3.67" width="1.4" height="1.4"/><rect x="4.07" y="11.4" width="1.4" height="1.4"/><rect x="11.7" y="3.67" width="1.4" height="1.4"/><rect x="7.14" y="1" width="1.4" height="1.4"/><rect x="1" y="6.34" width="1.4" height="1.4"/><rect x="22.5" y="6.34" width="1.4" height="1.4"/><rect x="7.14" y="11.4" width="1.4" height="1.4"/><rect x="11.7" y="6.34" width="1.4" height="1.4"/><rect x="10.21" y="1" width="1.4" height="1.4"/><rect x="1" y="9.01" width="1.4" height="1.4"/><rect x="22.5" y="9.01" width="1.4" height="1.4"/><rect x="10.21" y="11.4" width="1.4" height="1.4"/><rect x="11.7" y="9.01" width="1.4" height="1.4"/><rect x="13.28" y="1" width="1.4" height="1.4"/><rect x="1" y="11.68" width="1.4" height="1.4"/><rect x="22.5" y="11.68" width="1.4" height="1.4"/><rect x="13.28" y="11.4" width="1.4" height="1.4"/><rect x="11.7" y="11.68" width="1.4" height="1.4"/><rect x="16.35" y="1" width="1.4" height="1.4"/><rect x="1" y="14.35" width="1.4" height="1.4"/><rect x="22.5" y="14.35" width="1.4" height="1.4"/><rect x="16.35" y="11.4" width="1.4" height="1.4"/><rect x="11.7" y="14.35" width="1.4" height="1.4"/><rect x="19.42" y="1" width="1.4" height="1.4"/><rect x="1" y="17.03" width="1.4" height="1.4"/><rect x="22.5" y="17.03" width="1.4" height="1.4"/><rect x="19.42" y="11.4" width="1.4" height="1.4"/><rect x="11.7" y="17.03" width="1.4" height="1.4"/><rect x="22.49" y="1" width="1.4" height="1.4"/><rect x="1" y="19.70" width="1.4" height="1.4"/><rect x="22.5" y="19.70" width="1.4" height="1.4"/><rect x="22.49" y="11.4" width="1.4" height="1.4"/><rect x="11.7" y="19.70" width="1.4" height="1.4"/></g><rect x="1" y="21.8" width="22.9" height="1.8" fill="#000"/></svg>
<svg style="left:1198.8px;top:60.2px;" width="12.4" height="8.4" viewBox="0 0 12.4 8.4"><polyline points="2,2 6.2,6.4 10.4,2" fill="none" stroke="#242424" stroke-width="1.6"/></svg>
<svg style="left:1222px;top:52px;" width="18" height="14" viewBox="0 0 18 14"><path d="M2.2 6.6 H15.8 M7.4 1.4 L2.2 6.6 L7.4 11.8" fill="none" stroke="#1e8ad6" stroke-width="1.7"/></svg>
<span id="dec1a" class="t" style="left:1234.45px;top:48.88px;font-size:14.2px;line-height:18px;color:#3b3a39;font-family:'Liberation Sans',sans-serif;letter-spacing:0.980px;">.0</span>
<span id="dec1b" class="t" style="left:1227.33px;top:61.08px;font-size:14.2px;line-height:18px;color:#3b3a39;font-family:'Liberation Sans',sans-serif;">.00</span>
<span id="dec2a" class="t" style="left:1262.33px;top:48.88px;font-size:14.2px;line-height:18px;color:#3b3a39;font-family:'Liberation Sans',sans-serif;">.00</span>
<svg style="left:1257px;top:62px;" width="18" height="14" viewBox="0 0 18 14"><path d="M2.2 7 H15.4 M10.2 1.8 L15.4 7 L10.2 12.2" fill="none" stroke="#1e8ad6" stroke-width="1.7"/></svg>
<span id="dec2b" class="t" style="left:1269.57px;top:61.08px;font-size:14.2px;line-height:18px;color:#3b3a39;font-family:'Liberation Sans',sans-serif;letter-spacing:0.494px;">.0</span>
<svg style="left:1292px;top:50px;" width="28" height="27" viewBox="0 0 28 27"><path d="M12 7.6 L2.6 12.6 L12.8 24 L20.4 16.4 Z" fill="#fff" stroke="#d9730d" stroke-width="1.6" stroke-linejoin="round"/>
<path d="M5.6 15.6 L16.6 20.2 L12.8 24 Z" fill="#fbd98f" stroke="#d9730d" stroke-width="1.4" stroke-linejoin="round"/>
<path d="M11.6 7.4 L14.6 4.6 L17.6 7.6 L22.4 2.8 C23.6 1.6 26 3.6 24.8 5 L20 9.8 L23.2 13 L20.4 16 Z" fill="#fff" stroke="#3b3a39" stroke-width="1.6" stroke-linejoin="round"/></svg>
<div style="left:936px;top:110px;width:334px;height:694.5px;background:#fff;border:2px solid #c6c4c2;border-radius:7px;box-sizing:border-box;box-shadow:0 5px 14px rgba(0,0,0,.15),0 0 3px rgba(0,0,0,.05);"></div>
<div style="left:944px;top:118px;width:318px;height:42px;background:#fff;border:1px solid #767676;box-sizing:border-box;"></div>
<span id="search" class="t" style="left:962.61px;top:127.40px;font-size:17.6px;line-height:23px;color:#605e5c;font-family:'Liberation Sans',sans-serif;letter-spacing:-0.153px;">Search the menus</span>
<div style="left:986px;top:255.1px;width:282.5px;height:1.2px;background:#d2d0ce;"></div>
<div style="left:986px;top:302.0px;width:282.5px;height:1.2px;background:#d2d0ce;"></div>
<div style="left:986px;top:393.0px;width:282.5px;height:1.2px;background:#d2d0ce;"></div>
<div style="left:986px;top:440.0px;width:282.5px;height:1.2px;background:#d2d0ce;"></div>
<div style="left:986px;top:578.0px;width:282.5px;height:1.2px;background:#d2d0ce;"></div>
<div style="left:986px;top:669.0px;width:282.5px;height:1.2px;background:#d2d0ce;"></div>
<div style="left:935px;top:487px;width:334px;height:45px;background:#f5f5f5;border:5px solid #ed1c24;box-sizing:border-box;"></div>
<span id="m_copy" class="t" style="left:992.27px;top:177.27px;font-size:18.4px;line-height:24px;color:#262626;font-family:'Liberation Sans',sans-serif;letter-spacing:-0.201px;"><u>C</u>opy</span>
<span id="m_fmt" class="t" style="left:991.54px;top:221.27px;font-size:18.4px;line-height:24px;color:#262626;font-family:'Liberation Sans',sans-serif;letter-spacing:-0.545px;"><u>F</u>ormat Cells...</span>
<span id="m_refresh" class="t" style="left:991.54px;top:268.27px;font-size:18.4px;line-height:24px;color:#262626;font-family:'Liberation Sans',sans-serif;letter-spacing:-0.583px;"><u>R</u>efresh</span>
<span id="m_sort" class="t" style="left:992.33px;top:315.27px;font-size:18.4px;line-height:24px;color:#262626;font-family:'Liberation Sans',sans-serif;letter-spacing:0.010px;"><u>S</u>ort</span>
<span id="m_filter" class="t" style="left:991.54px;top:359.27px;font-size:18.4px;line-height:24px;color:#262626;font-family:'Liberation Sans',sans-serif;letter-spacing:-0.338px;">Fil<u>t</u>er</span>
<span id="m_subtotal" class="t" style="left:992.83px;top:406.27px;font-size:18.4px;line-height:24px;color:#262626;font-family:'Liberation Sans',sans-serif;letter-spacing:-0.103px;">Su<u>b</u>total &quot;Date &quot;</span>
<span id="m_expand" class="t" style="left:991.54px;top:453.27px;font-size:18.4px;line-height:24px;color:#262626;font-family:'Liberation Sans',sans-serif;letter-spacing:-0.374px;"><u>E</u>xpand/Collapse</span>
<span id="m_group" class="t" style="left:992.41px;top:500.27px;font-size:18.4px;line-height:24px;color:#262626;font-family:'Liberation Sans',sans-serif;letter-spacing:-0.311px;"><u>G</u>roup...</span>
<span id="m_ungroup" class="t" style="left:992.11px;top:544.27px;font-size:18.4px;line-height:24px;color:#262626;font-family:'Liberation Sans',sans-serif;letter-spacing:-0.104px;"><u>U</u>ngroup...</span>
<span id="m_move" class="t" style="left:991.54px;top:591.27px;font-size:18.4px;line-height:24px;color:#262626;font-family:'Liberation Sans',sans-serif;letter-spacing:0.691px;"><u>M</u>ove</span>
<span id="m_remove" class="t" style="left:992.18px;top:635.27px;font-size:18.4px;line-height:24px;color:#262626;font-family:'Liberation Sans',sans-serif;letter-spacing:-0.301px;">Remo<u>v</u>e &quot;Date &quot;</span>
<span id="m_fset" class="t" style="left:992.54px;top:682.27px;font-size:18.4px;line-height:24px;color:#262626;font-family:'Liberation Sans',sans-serif;letter-spacing:-0.465px;">Field Setti<u>n</u>gs...</span>
<span id="m_pvopt" class="t" style="left:991.54px;top:726.27px;font-size:18.4px;line-height:24px;color:#262626;font-family:'Liberation Sans',sans-serif;letter-spacing:-0.172px;">PivotTable <u>O</u>ptions...</span>
<span id="m_sfl" class="t" style="left:992.09px;top:770.27px;font-size:18.4px;line-height:24px;color:#262626;font-family:'Liberation Sans',sans-serif;letter-spacing:-0.488px;">Show Fiel<u>d</u> List</span>
<svg style="left:1244px;top:314.25px;" width="16" height="20" viewBox="0 0 16 20"><polyline points="3.6,3.2 11.2,10 3.6,16.8" fill="none" stroke="#3b3b3b" stroke-width="1.5"/></svg>
<svg style="left:1244px;top:358.25px;" width="16" height="20" viewBox="0 0 16 20"><polyline points="3.6,3.2 11.2,10 3.6,16.8" fill="none" stroke="#3b3b3b" stroke-width="1.5"/></svg>
<svg style="left:1244px;top:452.25px;" width="16" height="20" viewBox="0 0 16 20"><polyline points="3.6,3.2 11.2,10 3.6,16.8" fill="none" stroke="#3b3b3b" stroke-width="1.5"/></svg>
<svg style="left:1244px;top:590.25px;" width="16" height="20" viewBox="0 0 16 20"><polyline points="3.6,3.2 11.2,10 3.6,16.8" fill="none" stroke="#3b3b3b" stroke-width="1.5"/></svg>
<svg style="left:954px;top:173px;" width="28" height="28" viewBox="0 0 28 28"><path d="M9.4 22.6 H2.8 V2.8 H12.4 L14.2 4.6" fill="none" stroke="#3b3a39" stroke-width="1.5"/>
<path d="M11.4 7.2 H20.6 L25.2 11.8 V25 H11.4 Z" fill="#fafafa" stroke="#3b3a39" stroke-width="1.5"/>
<path d="M20.4 7.4 V12 H25" fill="none" stroke="#3b3a39" stroke-width="1.3"/>
<path d="M14.6 17 H22 M14.6 20.4 H22" stroke="#797775" stroke-width="1.3"/></svg>
<svg style="left:957px;top:217px;" width="24" height="28" viewBox="0 0 24 28"><rect x="2.8" y="2.8" width="16.6" height="22" fill="#f3f3f3" stroke="#3b3a39" stroke-width="1.5"/>
<rect x="6.6" y="8.8" width="3" height="3" fill="none" stroke="#797775" stroke-width="1.2"/><rect x="6.6" y="16.2" width="3" height="3" fill="none" stroke="#797775" stroke-width="1.2"/>
<path d="M11.6 10.3 H15.2 M11.6 17.7 H15.2" stroke="#797775" stroke-width="1.2"/></svg>
<svg style="left:956px;top:263px;" width="27" height="30" viewBox="0 0 27 30"><path d="M8 26.4 H3.6 V3.6 H13.4 L21 10.4" fill="none" stroke="#3b3a39" stroke-width="1.5"/>
<path d="M13.4 3.8 V10.4 H20.8" fill="none" stroke="#3b3a39" stroke-width="1.5"/>
<path d="M11.6 18.4 C12.2 15.4 15 13.6 17.8 13.8 C20 14 21.8 15.2 22.8 16.8" fill="none" stroke="#2ea04e" stroke-width="1.7"/>
<path d="M23.4 12.6 V17.2 H18.8" fill="none" stroke="#2ea04e" stroke-width="1.7"/>
<path d="M23.6 21 C22.8 24 20 25.8 17.2 25.6 C15 25.4 13.2 24.2 12.2 22.6" fill="none" stroke="#2ea04e" stroke-width="1.7"/>
<path d="M11.6 26.8 V22.2 H16.2" fill="none" stroke="#2ea04e" stroke-width="1.7"/></svg>
<svg style="left:954px;top:404px;" width="28" height="24" viewBox="0 0 28 24"><polyline points="3.4,13.2 9.6,20.2 24.6,4.2" fill="none" stroke="#2ea04e" stroke-width="2.6"/></svg>
<svg style="left:954px;top:497px;" width="28" height="24" viewBox="0 0 28 24"><path d="M14 3.4 H8.4 V6 M8.4 19 V21.6 H14" fill="none" stroke="#797775" stroke-width="1.3"/>
<rect x="2.8" y="7.8" width="9.2" height="9.2" fill="#fff" stroke="#3b3a39" stroke-width="1.6"/>
<path d="M5 12.4 H9.8 M7.4 10 V14.8" stroke="#2b88d8" stroke-width="1.7"/><rect x="16.2" y="3.4" width="9.4" height="18" fill="#fafafa" stroke="#3b3a39" stroke-width="1.6"/><path d="M16.2 9.4 H25.6 M16.2 15.8 H25.6" stroke="#605e5c" stroke-width="1.4"/></svg>
<svg style="left:954px;top:541px;" width="28" height="24" viewBox="0 0 28 24"><path d="M14 3.2 H8.4 V5.8 M8.4 19 V21.6 H14" fill="none" stroke="#797775" stroke-width="1.3"/>
<rect x="2.9" y="7.9" width="9" height="9" fill="#fdf3f3" stroke="#e8383d" stroke-width="1.7"/>
<path d="M3.4 16.4 L11.4 8.4" stroke="#e8383d" stroke-width="1.6"/><rect x="16.2" y="3.2" width="9.4" height="18" fill="#fafafa" stroke="#3b3a39" stroke-width="1.6"/><path d="M16.2 9.2 H25.6 M16.2 15.600000000000001 H25.6" stroke="#605e5c" stroke-width="1.4"/></svg>
<svg style="left:957px;top:634px;" width="22" height="22" viewBox="0 0 22 22"><path d="M2.8 2.8 L19.4 19.4 M19.4 2.8 L2.8 19.4" stroke="#e8383d" stroke-width="1.7" fill="none"/></svg>
<svg style="left:954px;top:678px;" width="29" height="29" viewBox="0 0 29 29"><path d="M24.8 11.4 V2.8 H2.8 V25.2 H12.6" fill="none" stroke="#3b3a39" stroke-width="1.6"/>
<rect x="5.6" y="5.8" width="3.4" height="3.4" fill="#e6e6e6" stroke="#797775" stroke-width="1.2"/>
<rect x="11.4" y="5.8" width="11" height="3.4" fill="#e6e6e6" stroke="#797775" stroke-width="1.2"/>
<rect x="5.6" y="12" width="3.4" height="10.6" fill="#e6e6e6" stroke="#797775" stroke-width="1.2"/>
<polygon points="25.90,19.00 22.75,21.05 22.55,24.80 19.20,23.10 15.85,24.80 15.65,21.05 12.50,19.00 15.65,16.95 15.85,13.20 19.20,14.90 22.55,13.20 22.75,16.95" fill="#fff" stroke="#2488d8" stroke-width="1.9" stroke-linejoin="miter"/>
<circle cx="19.2" cy="19.0" r="2" fill="#2488d8"/></svg>
<svg style="left:957px;top:766px;" width="22" height="28" viewBox="0 0 22 28"><rect x="2.8" y="2.8" width="15.6" height="22.4" fill="#fafafa" stroke="#3b3a39" stroke-width="1.5"/>
<path d="M2.8 15.6 H18.4 M2.8 20.4 H18.4 M10.6 15.6 V25.2" stroke="#3b3a39" stroke-width="1.4" fill="none"/>
<path d="M6 7.2 H7.6 M9.4 7.2 H15 M6 11.4 H7.6 M9.4 11.4 H15" stroke="#797775" stroke-width="1.3"/></svg>
</body></html>
